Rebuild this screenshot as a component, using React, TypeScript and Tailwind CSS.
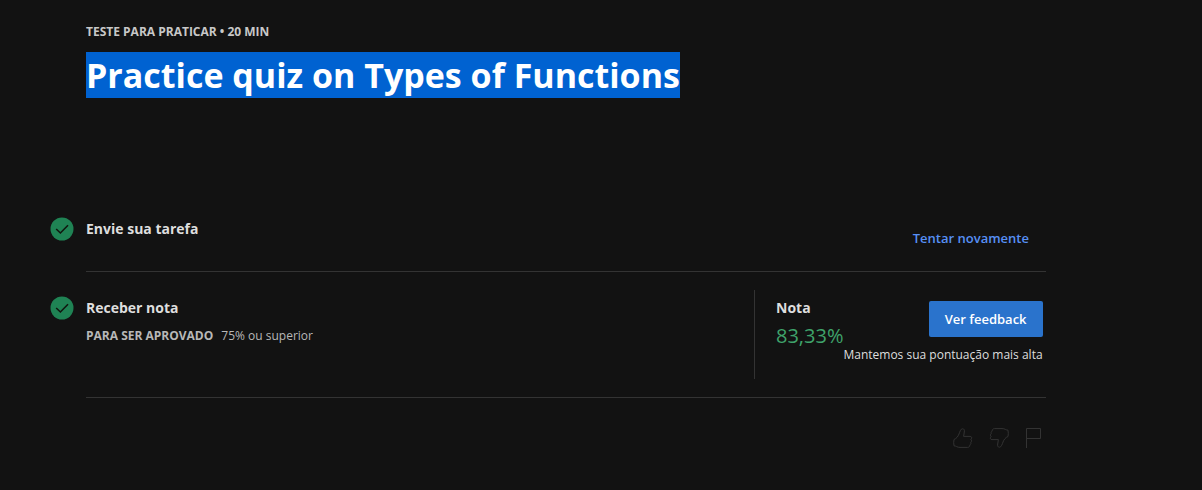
import type { ReactNode } from 'react';

function CheckBadge() {
  return (
    <svg viewBox="0 0 24 24" className="size-6 shrink-0" aria-hidden="true">
      <circle cx="12" cy="12" r="11.5" fill="#1f8354" />
      <path d="M6.2 12 10.4 16 18 8.200" fill="none" stroke="#10170f" strokeWidth="1.6" />
    </svg>
  );
}

function Step({ children }: { children: ReactNode }) {
  return <li className="flex gap-3">{children}</li>;
}

function ThumbIcon({ down = false }: { down?: boolean }) {
  return (
    <svg viewBox="0 0 20 20" className={down ? 'size-5 rotate-180' : 'size-5'} fill="none" stroke="currentColor" aria-hidden="true">
      <path d="M1 11.500C3.500 10.500 5 8.500 6 6C6.800 4 7.600.800 9.500.800C11.300.800 11.600 2.200 11.300 4L10.600 8.400H17C18.400 8.400 18.900 9.300 18.600 10.300C18.500 10.800 18.200 11.200 17.900 11.400C18.900 12.300 18.600 13.800 17.800 14.300C18.200 15.300 17.700 16.500 16.900 16.800C16.900 18.400 15.900 19.400 14.500 19.400H7C4 19.400 3.300 18 1 17.800" />
      <path d="M1 11.500C.600 13.500.600 15.800 1 17.800" />
    </svg>
  );
}

function FlagIcon() {
  return (
    <svg viewBox="0 0 16 20" className="h-5 w-4" fill="none" stroke="currentColor" aria-hidden="true">
      <path d="M1.500 20V.5H15.500V10.500H1.500" />
    </svg>
  );
}

export default function App() {
  return (
    <main className="min-h-screen bg-[#121212] px-[50px] pt-[22px] pb-8 font-['Open_Sans','Noto_Sans',sans-serif] text-[#dedede]">
      <div className="max-w-[996px]">
        <header className="pl-9">
          <p className="text-xs leading-5 font-bold text-[#c8c8c8]">TESTE PARA PRATICAR • 20 MIN</p>
          <h1 className="mt-2.5 text-[34px] leading-[46px] font-bold text-white">
            <span className="bg-[#0062d1]">Practice quiz on Types of Functions</span>
          </h1>
        </header>

        <ol className="mt-[119px]">
          <Step>
            <CheckBadge />
            <div className="flex flex-1 justify-between border-b border-[#333] pr-[17px] pb-[23px]">
              <h2 className="text-sm leading-6 font-bold">Envie sua tarefa</h2>
              <a href="#tentar" className="mt-[11px] text-[13px] leading-5 font-semibold text-[#5790f5]">
                Tentar novamente
              </a>
            </div>
          </Step>
          <Step>
            <div className="pt-6">
              <CheckBadge />
            </div>
            <div className="flex flex-1 justify-between border-b border-[#333] py-[18px]">
              <div className="pt-1.5">
                <h2 className="text-sm leading-6 font-bold">Receber nota</h2>
                <p className="mt-1.5 flex gap-2 text-xs leading-5 text-[#b8b8b8]">
                  <strong>PARA SER APROVADO</strong>
                  <span>75% ou superior</span>
                </p>
              </div>
              <div className="flex w-[292px] justify-between border-l border-[#333] pr-1 pb-3.5 pl-[21px]">
                <div className="pt-1.5">
                  <h3 className="text-sm leading-6 font-bold">Nota</h3>
                  <p className="mt-1 text-xl leading-6 text-[#3fa36b]">83,33%</p>
                </div>
                <div className="flex flex-col items-end pt-[11px]">
                  <button type="button" className="h-9 rounded-xs bg-[#2a73cc] px-4 pt-0.5 text-[13px] font-semibold text-white">
                    Ver feedback
                  </button>
                  <p className="mt-2 text-xs leading-5 whitespace-nowrap">Mantemos sua pontuação mais alta</p>
                </div>
              </div>
            </div>
          </Step>
        </ol>

        <div className="mt-[30px] flex justify-end gap-4 pr-[5px] text-[#333]">
          <button type="button" aria-label="Gostei">
            <ThumbIcon />
          </button>
          <button type="button" aria-label="Não gostei">
            <ThumbIcon down />
          </button>
          <button type="button" aria-label="Denunciar">
            <FlagIcon />
          </button>
        </div>
      </div>
    </main>
  );
}
